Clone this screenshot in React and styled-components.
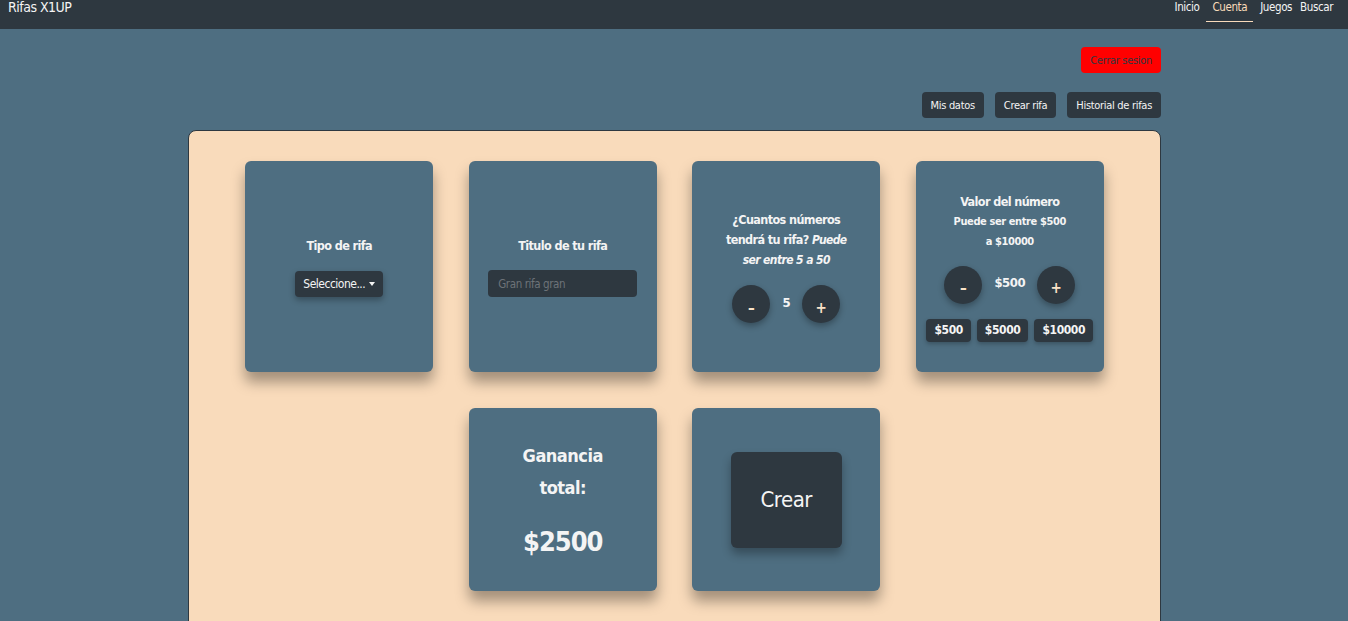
import React from 'react';
import styled, { createGlobalStyle } from 'styled-components';

const Global = createGlobalStyle`
	body {
		margin: 0;
		background: #4e6e81;
		font-family: "DejaVu Sans Condensed", "Liberation Sans", sans-serif;
		color: #f4f4f4;
	}
`;

const Nav = styled.nav`
	height: 29px;
	background: #2e3840;
	display: flex;
	align-items: flex-start;
	justify-content: space-between;
	padding: 0 14px 0 8px;
`;

const Brand = styled.a`
	font-size: 14px;
	letter-spacing: -0.5px;
	color: #f4f4f4;
	line-height: 15px;
	text-decoration: none;
`;

const Links = styled.div`
	display: flex;
	gap: 6px;
`;

const NavLink = styled.a`
	font-size: 11.5px;
	letter-spacing: -0.4px;
	line-height: 15px;
	padding: 0 ${p => (p.$active ? 6 : 1)}px 6px;
	color: ${p => (p.$active ? '#f9dbbb' : '#f4f4f4')};
	border-bottom: 1px solid ${p => (p.$active ? '#f9dbbb' : 'transparent')};
`;

const Page = styled.div`
	width: 973px;
	margin: 0 0 0 calc(50% - 486px);
	padding-top: 18px;
`;

const TopRow = styled.div`
	display: flex;
	justify-content: flex-end;
	gap: 11px;
	margin-bottom: ${p => p.$mb || 0}px;
`;

const Btn = styled.button`
	border: none;
	border-radius: 4px;
	height: 26px;
	padding: 0 9px;
	font-family: inherit;
	font-size: 11px;
	letter-spacing: -0.3px;
	background: ${p => (p.$danger ? '#ff0000' : '#2e3840')};
	color: ${p => (p.$danger ? '#2e3840' : '#f4f4f4')};
`;

const Panel = styled.div`
	background: #f9dbbb;
	border: 1px solid #2e3840;
	border-radius: 8px;
	padding: 30px 0 40px;
	display: grid;
	grid-template-columns: repeat(4, 188px);
	justify-content: center;
	column-gap: 35.5px;
	row-gap: 36px;
`;

const Card = styled.div`
	background: #4e6e81;
	border-radius: 6px;
	height: ${p => p.$h}px;
	grid-column: ${p => p.$col || 'auto'};
	box-shadow: 0 10px 14px rgba(0, 0, 0, 0.35);
	display: flex;
	flex-direction: column;
	align-items: center;
	justify-content: center;
	text-align: center;
	padding: 0 10px;
	box-sizing: border-box;
`;

const Title = styled.div`
	font-weight: bold;
	font-size: ${p => p.$size || 12.5}px;
	letter-spacing: ${p => p.$ls || -0.6}px;
	line-height: ${p => p.$lh || 20}px;
	margin-bottom: ${p => p.$mb || 0}px;
	white-space: nowrap;
`;

const Em = styled.i`
	font-size: 12px;
`;

const Select = styled.div`
	background: #2e3840;
	border-radius: 4px;
	height: 26px;
	padding: 0 8px;
	display: flex;
	align-items: center;
	gap: 4px;
	font-size: 12px;
	letter-spacing: -0.5px;
	box-shadow: 0 3px 6px rgba(0, 0, 0, 0.3);
`;

const Caret = styled.span`
	border-left: 3px solid transparent;
	border-right: 3px solid transparent;
	border-top: 4px solid #f4f4f4;
`;

const Input = styled.input`
	width: 149px;
	height: 27px;
	box-sizing: border-box;
	border: none;
	border-radius: 4px;
	background: #2e3840;
	padding: 0 10px;
	font-family: inherit;
	font-size: 11.5px;
	letter-spacing: -0.4px;
	color: #f4f4f4;
	&::placeholder { color: #6d7378; }
`;

const Stepper = styled.div`
	display: flex;
	align-items: center;
	gap: 12px;
	margin-top: ${p => p.$mt || 0}px;
`;

const Circle = styled.button`
	width: 38px;
	height: 38px;
	border-radius: 50%;
	border: none;
	background: #2e3840;
	color: #fbe3c8;
	font-family: inherit;
	font-size: 15px;
	font-weight: bold;
	padding-top: 8px;
	box-shadow: 0 3px 6px rgba(0, 0, 0, 0.3);
`;

const Value = styled.span`
	font-weight: bold;
	font-size: 13px;
	letter-spacing: -0.5px;
	margin-top: -4px;
`;

const Chips = styled.div`
	display: flex;
	gap: 6px;
	margin-top: 15px;
`;

const Chip = styled.button`
	border: none;
	border-radius: 4px;
	height: 23px;
	padding: 0 8px;
	background: #2e3840;
	color: #f4f4f4;
	font-family: inherit;
	font-weight: bold;
	font-size: 12px;
	letter-spacing: -0.4px;
	box-shadow: 0 2px 4px rgba(0, 0, 0, 0.25);
`;

const Create = styled.button`
	width: 111px;
	height: 96px;
	border: none;
	border-radius: 6px;
	background: #2e3840;
	color: #f4f4f4;
	font-family: inherit;
	font-size: 22px;
	letter-spacing: -0.5px;
	box-shadow: 0 6px 10px rgba(0, 0, 0, 0.3);
`;

export default function App() {
	return (
		<>
			<Global />
			<Nav>
				<Brand>Rifas X1UP</Brand>
				<Links>
					<NavLink>Inicio</NavLink>
					<NavLink $active>Cuenta</NavLink>
					<NavLink>Juegos</NavLink>
					<NavLink>Buscar</NavLink>
				</Links>
			</Nav>
			<Page>
				<TopRow $mb={19}>
					<Btn $danger>Cerrar sesion</Btn>
				</TopRow>
				<TopRow $mb={12}>
					<Btn>Mis datos</Btn>
					<Btn>Crear rifa</Btn>
					<Btn>Historial de rifas</Btn>
				</TopRow>
				<Panel>
					<Card $h={211}>
						<Title $mb={15}>Tipo de rifa</Title>
						<Select>Seleccione... <Caret /></Select>
					</Card>
					<Card $h={211}>
						<Title $mb={14}>Titulo de tu rifa</Title>
						<Input placeholder="Gran rifa gran" />
					</Card>
					<Card $h={211}>
						<Title>
							¿Cuantos números<br />
							tendrá tu rifa? <Em>Puede</Em><br />
							<Em>ser entre 5 a 50</Em>
						</Title>
						<Stepper $mt={15}>
							<Circle>–</Circle>
							<Value>5</Value>
							<Circle>+</Circle>
						</Stepper>
					</Card>
					<Card $h={211}>
						<Title>Valor del número</Title>
						<Title $size={11} $ls={-0.4}>Puede ser entre $500<br />a $10000</Title>
						<Stepper $mt={14}>
							<Circle>–</Circle>
							<Value>$500</Value>
							<Circle>+</Circle>
						</Stepper>
						<Chips>
							<Chip>$500</Chip>
							<Chip>$5000</Chip>
							<Chip>$10000</Chip>
						</Chips>
					</Card>
					<Card $h={183} $col={2}>
						<Title $size={18} $ls={-0.5} $lh={32} $mb={20}>Ganancia<br />total:</Title>
						<Title $size={27} $ls={-1} $lh={36}>$2500</Title>
					</Card>
					<Card $h={183} $col={3}>
						<Create>Crear</Create>
					</Card>
				</Panel>
			</Page>
		</>
	);
}
